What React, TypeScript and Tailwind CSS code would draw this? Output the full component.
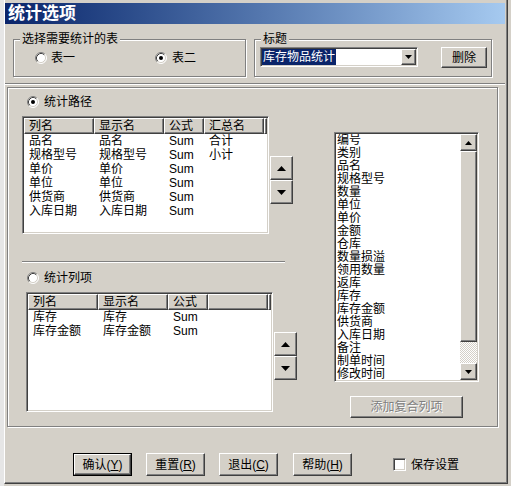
import React from "react";

const raised =
  "border border-t-white border-l-white border-r-[#404040] border-b-[#404040] shadow-[inset_-1px_-1px_0_#808080] bg-[#d4d0c8]";
const sunken =
  "border border-t-[#808080] border-l-[#808080] border-r-white border-b-white shadow-[inset_1px_1px_0_#404040,inset_-1px_-1px_0_#d4d0c8]";
const etched = "border border-[#808080] shadow-[inset_1px_1px_0_#fff,1px_1px_0_#fff]";

function Radio({ checked }: { checked?: boolean }) {
  return (
    <svg width="12" height="12" viewBox="0 0 12 12" className="shrink-0">
      <circle cx="6" cy="6" r="5" fill="#fff" />
      <path d="M2.11 9.89 A5.5 5.5 0 0 1 9.89 2.11" stroke="#808080" fill="none" />
      <path d="M9.89 2.11 A5.5 5.5 0 0 1 2.11 9.89" stroke="#fff" fill="none" />
      <path d="M2.82 9.18 A4.5 4.5 0 0 1 9.18 2.82" stroke="#404040" fill="none" />
      <path d="M9.18 2.82 A4.5 4.5 0 0 1 2.82 9.18" stroke="#d4d0c8" fill="none" />
      {checked && <circle cx="6" cy="6" r="2" fill="#000" />}
    </svg>
  );
}

function Tri({ up, w, h }: { up?: boolean; w: number; h: number }) {
  const pts = up ? `0,${h} ${w},${h} ${w / 2},0` : `0,0 ${w},0 ${w / 2},${h}`;
  return (
    <svg width={w} height={h} viewBox={`0 0 ${w} ${h}`}>
      <polygon points={pts} fill="#000" />
    </svg>
  );
}

const widths = [70, 70, 40, 60];

function ListView({
  heads,
  rows,
  h,
}: {
  heads: string[];
  rows: string[][];
  h: string;
}) {
  return (
    <div className={`w-[247px] ${h} ${sunken} p-px bg-white flex flex-col overflow-hidden`}>
      <div className="flex h-[16px] shrink-0">
        {heads.map((t, i) => (
          <div
            key={i}
            className={`${raised} h-[16px] pl-[4px] leading-[14px] whitespace-nowrap overflow-hidden`}
            style={{ width: widths[i] }}
          >
            {t}
          </div>
        ))}
        <div className={`${raised} h-[16px] flex-1`} />
      </div>
      {rows.map((r, ri) => (
        <div key={ri} className="flex h-[14px] leading-[14px]">
          {r.map((c, ci) => (
            <div key={ci} className="pl-[5px] whitespace-nowrap" style={{ width: widths[ci] }}>
              {c}
            </div>
          ))}
        </div>
      ))}
    </div>
  );
}

function UpDown() {
  return (
    <div className="flex flex-col">
      <div className={`${raised} w-[23px] h-[24px] flex items-center justify-center`}>
        <Tri up w={9} h={5} />
      </div>
      <div className={`${raised} w-[23px] h-[24px] flex items-center justify-center`}>
        <Tri w={9} h={5} />
      </div>
    </div>
  );
}

const fields = [
  "编号",
  "类别",
  "品名",
  "规格型号",
  "数量",
  "单位",
  "单价",
  "金额",
  "仓库",
  "数量损溢",
  "领用数量",
  "返库",
  "库存",
  "库存金额",
  "供货商",
  "入库日期",
  "备注",
  "制单时间",
  "修改时间",
];

function Btn({ label, k, def }: { label: string; k: string; def?: boolean }) {
  const inner = (
    <div className={`${raised} w-full h-full flex items-center justify-center whitespace-nowrap`}>
      {label}(<u>{k}</u>)
    </div>
  );
  return def ? (
    <div className="w-[59px] h-[23px] border border-black">{inner}</div>
  ) : (
    <div className="w-[59px] h-[23px]">{inner}</div>
  );
}

export default function App() {
  return (
    <div className="w-[511px] h-[486px] bg-[#d4d0c8] flex text-[12px] leading-[14px] text-black font-['Liberation_Sans','Noto_Sans_CJK_SC',sans-serif] overflow-hidden">
      <div className="w-[4px] h-full bg-[#e6e6e6] shrink-0" />
      <div className="w-[504px] h-[484px] shrink-0 border-l border-l-white border-r border-r-[#404040] border-b border-b-[#404040] shadow-[inset_-1px_-1px_0_#808080] pt-[3px] pr-[2px] flex flex-col">
        {/* title bar */}
        <div className="h-[21px] shrink-0 bg-linear-to-r from-[#0a246a] to-[#a6caf0] pl-[3px] text-white font-bold text-[17px] leading-[21px]">
          统计选项
        </div>

        {/* group boxes */}
        <div className="flex mt-[15px] pl-[8px] gap-[8px]">
          <div className={`relative w-[233px] h-[38px] ${etched}`}>
            <span className="absolute left-[6px] top-[-7px] px-[2px] bg-[#d4d0c8] leading-[13px]">
              选择需要统计的表
            </span>
            <div className="flex pt-[12px] pl-[21px]">
              <div className="w-[120px] h-[12px] flex items-center gap-[4px]">
                <Radio />
                <span>表一</span>
              </div>
              <div className="h-[12px] flex items-center gap-[5px]">
                <Radio checked />
                <span>表二</span>
              </div>
            </div>
          </div>
          <div className={`relative w-[238px] h-[38px] ${etched}`}>
            <span className="absolute left-[6px] top-[-7px] px-[2px] bg-[#d4d0c8] leading-[13px]">标题</span>
            <div className="flex items-start pt-[7px] pl-[5px]">
              <div className={`w-[158px] h-[20px] ${sunken} p-px bg-white flex`}>
                <div className="flex-1 flex items-center">
                  <span className="bg-[#0a246a] text-white px-px h-[16px] leading-[16px]">库存物品统计</span>
                </div>
                <div className={`${raised} w-[15px] h-[16px] flex items-center justify-center`}>
                  <Tri w={7} h={4} />
                </div>
              </div>
              <div className={`${raised} ml-[23px] w-[46px] h-[21px] flex items-center justify-center`}>删除</div>
            </div>
          </div>
        </div>

        {/* separator */}
        <div className="mt-[6px] h-[2px] shrink-0 border-t border-t-[#808080] border-b border-b-white" />

        {/* main panel */}
        <div className={`mt-[2px] ml-[2px] w-[491px] h-[340px] shrink-0 ${etched} flex`}>
          <div className="w-[289px] pl-[14px] flex flex-col shrink-0">
            <div className="mt-[7px] h-[14px] flex items-center pl-[5px] gap-[5px]">
              <Radio checked />
              <span>统计路径</span>
            </div>
            <div className="mt-[7px] flex items-start">
              <ListView
                h="h-[118px]"
                heads={["列名", "显示名", "公式", "汇总名"]}
                rows={[
                  ["品名", "品名", "Sum", "合计"],
                  ["规格型号", "规格型号", "Sum", "小计"],
                  ["单价", "单价", "Sum", ""],
                  ["单位", "单位", "Sum", ""],
                  ["供货商", "供货商", "Sum", ""],
                  ["入库日期", "入库日期", "Sum", ""],
                ]}
              />
              <div className="ml-[1px] mt-[40px]">
                <UpDown />
              </div>
            </div>
            <div className="mt-[27px] w-[263px] h-[2px] border-t border-t-[#808080] border-b border-b-white" />
            <div className="mt-[8px] h-[14px] flex items-center pl-[5px] gap-[5px]">
              <Radio />
              <span>统计列项</span>
            </div>
            <div className="mt-[7px] ml-[4px] flex items-start">
              <ListView
                h="h-[120px]"
                heads={["列名", "显示名", "公式", ""]}
                rows={[
                  ["库存", "库存", "Sum", ""],
                  ["库存金额", "库存金额", "Sum", ""],
                ]}
              />
              <div className="ml-[1px] mt-[40px]">
                <UpDown />
              </div>
            </div>
          </div>

          <div className="ml-[37px] flex flex-col">
            <div className={`mt-[44px] w-[145px] h-[250px] ${sunken} p-px bg-white flex`}>
              <div className="flex-1 overflow-hidden pl-px">
                {fields.map((f) => (
                  <div key={f} className="h-[13px] leading-[13px] whitespace-nowrap">
                    {f}
                  </div>
                ))}
              </div>
              <div className="w-[17px] flex flex-col shrink-0">
                <div className={`${raised} h-[17px] flex items-center justify-center`}>
                  <Tri up w={7} h={4} />
                </div>
                <div className={`${raised} h-[191px]`} />
                <div className="flex-1 bg-[repeating-conic-gradient(#fff_0%_25%,#d4d0c8_0%_50%)] bg-[length:2px_2px]" />
                <div className={`${raised} h-[17px] flex items-center justify-center`}>
                  <Tri w={7} h={4} />
                </div>
              </div>
            </div>
            <div
              className={`${raised} mt-[14px] ml-[16px] w-[113px] h-[22px] flex items-center justify-center text-[#808080] [text-shadow:1px_1px_0_#fff]`}
            >
              添加复合列项
            </div>
          </div>
        </div>

        {/* bottom buttons */}
        <div className="mt-[26px] pl-[68px] flex items-center h-[23px]">
          <Btn label="确认" k="Y" def />
          <div className="ml-[14px]">
            <Btn label="重置" k="R" />
          </div>
          <div className="ml-[14px]">
            <Btn label="退出" k="C" />
          </div>
          <div className="ml-[15px]">
            <Btn label="帮助" k="H" />
          </div>
          <div className={`ml-[41px] w-[13px] h-[13px] bg-white ${sunken}`} />
          <span className="ml-[5px]">保存设置</span>
        </div>
      </div>
    </div>
  );
}
